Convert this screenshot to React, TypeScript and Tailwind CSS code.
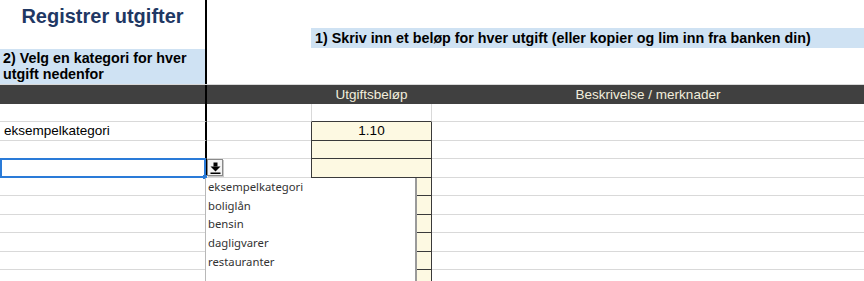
import React from "react";

const rowHeights = [18, 19, 18, 19, 18, 19, 18, 19, 18, 19];

function DropButton() {
  return (
    <div className="w-[16px] h-[17px] border border-[#8a8a8a] bg-[#f4f4f4] flex items-center justify-center shadow-[1px_1px_0_#c8c8c8]">
      <svg width="11" height="12" viewBox="0 0 11 12">
        <rect x="3.5" y="0.5" width="4" height="4" fill="#000" />
        <polygon points="0.5,4.5 10.5,4.5 5.5,9.5" fill="#000" />
        <rect x="0.5" y="10.5" width="10" height="1.5" fill="#000" />
      </svg>
    </div>
  );
}

export default function App() {
  return (
    <div
      className="relative w-[864px] h-[281px] overflow-hidden bg-white text-black"
      style={{ fontFamily: '"Liberation Sans", Arial, sans-serif' }}
    >
      {/* top section */}
      <div className="flex h-[85px] border-b border-[#d9d9d9]">
        <div className="w-[207px] shrink-0 border-r-2 border-black flex flex-col">
          <div className="h-[49px] text-center text-[20px] leading-[32px] font-bold text-[#1f3864]">
            Registrer utgifter
          </div>
          <div className="h-[35px] bg-[#cfe2f3] px-[3px] pt-[1px] text-[14.3px] leading-[16px] font-bold">
            2) Velg en kategori for hver utgift nedenfor
          </div>
        </div>
        <div className="w-[104px] shrink-0" />
        <div className="flex-1 flex flex-col">
          <div className="h-[28px]" />
          <div className="h-[20px] bg-[#cfe2f3] pl-[4px] text-[14.3px] leading-[20px] font-bold whitespace-nowrap">
            1) Skriv inn et beløp for hver utgift (eller kopier og lim inn fra banken din)
          </div>
        </div>
      </div>

      {/* header row */}
      <div className="flex h-[19px] bg-[#404040] text-[#f2eedc] text-[13.5px] leading-[19px]">
        <div className="w-[207px] shrink-0 border-r-2 border-black" />
        <div className="w-[104px] shrink-0" />
        <div className="w-[121px] shrink-0 text-center">Utgiftsbeløp</div>
        <div className="flex-1 text-center">Beskrivelse / merknader</div>
      </div>

      {/* data rows */}
      {rowHeights.map((h, i) => {
        const yellow = i >= 1;
        return (
          <div key={i} className="flex" style={{ height: h }}>
            <div className="relative w-[207px] shrink-0 border-r-2 border-black border-b border-b-[#d9d9d9] pl-[4px] text-[13.5px] leading-[18px]">
              {i === 1 ? "eksempelkategori" : ""}
              {i === 3 && (
                <div className="absolute left-0 right-[-1px] top-[-1px] bottom-[-1px] border-2 border-[#2a7bd8]">
                  <div className="absolute right-[-3px] bottom-[-3px] w-[4px] h-[4px] bg-[#2a7bd8]" />
                </div>
              )}
            </div>
            <div className="w-[104px] shrink-0 border-b border-[#d9d9d9]">
              {i === 3 && <DropButton />}
            </div>
            {yellow ? (
              <div className="w-[121px] shrink-0 bg-[#fdf9e2] border-x border-b border-[#3a3a3a] text-center text-[13.5px] leading-[18px]">
                {i === 1 ? "1.10" : ""}
              </div>
            ) : (
              <div className="w-[121px] shrink-0 border-l border-r border-[#d9d9d9] border-b border-b-[#3a3a3a]" />
            )}
            <div className="flex-1 border-b border-[#d9d9d9]" />
          </div>
        );
      })}

      {/* dropdown list */}
      <div className="absolute left-[205px] top-[178px] w-[212px] h-[110px] bg-white border-l border-[#b8b8b8] border-r-2 border-r-[#9a9a9a] pl-[2px] text-[#333] text-[11.3px] leading-[18.7px]" style={{ fontFamily: '"Noto Sans", "Open Sans", sans-serif' }}>
        <div>eksempelkategori</div>
        <div>boliglån</div>
        <div>bensin</div>
        <div>dagligvarer</div>
        <div>restauranter</div>
      </div>
    </div>
  );
}
